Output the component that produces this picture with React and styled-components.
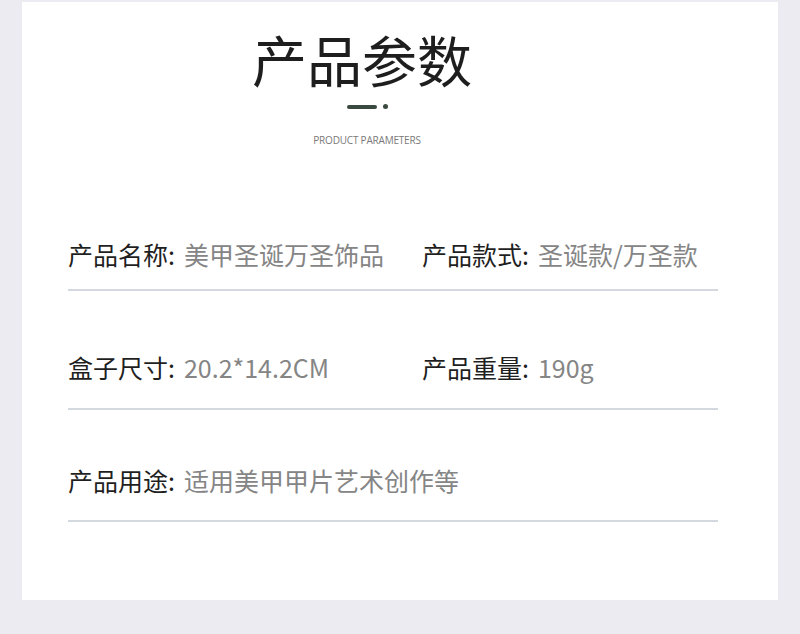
import styled, { createGlobalStyle } from 'styled-components';

const GlobalStyle = createGlobalStyle`
    html, body {
        margin: 0;
        padding: 0;
        background: #ebebf1;
    }
    body {
        font-family: "Noto Sans CJK SC", "Noto Sans", sans-serif;
    }
`

const Page = styled.div`
    width: 800px;
    height: 634px;
    padding: 2px 22px 0;
    box-sizing: border-box;
`

const Card = styled.div`
    background: #ffffff;
    padding: 29px 60px 78px 46px;
    box-sizing: border-box;
    height: 598px;
`

const Header = styled.div`
    display: flex;
    flex-direction: column;
    align-items: center;
    padding-right: 52px;
`

const Title = styled.h1`
    margin: 0 10px 0 0;
    font-size: 55px;
    line-height: 55px;
    font-weight: 400;
    color: #1e1e1e;
`

const Decor = styled.div`
    display: flex;
    align-items: center;
    gap: 6px;
    margin-top: 18px;
`

const Dash = styled.span`
    width: 30px;
    height: 4px;
    border-radius: 2px;
    background: #3b4a3e;
`

const Dot = styled.span`
    width: 5px;
    height: 5px;
    border-radius: 50%;
    background: #3b4a3e;
`

const Subtitle = styled.div`
    margin-top: 25px;
    font-family: "Open Sans", "Liberation Sans", sans-serif;
    font-size: 10px;
    line-height: 12px;
    color: #7a7a7a;
    letter-spacing: -0.2px;
`

const Table = styled.div`
    margin-top: 33px;
    width: 650px;
`

const Row = styled.div`
    display: grid;
    grid-template-columns: 354px 1fr;
    padding: ${(props) => props.$top}px 0 ${(props) => props.$bottom}px;
    border-bottom: 2px solid #d4d9df;
`

const Cell = styled.div`
    display: flex;
    align-items: baseline;
    font-size: 25px;
    line-height: 34px;
    white-space: nowrap;
`

const Label = styled.span`
    color: #1f1f1f;
`

const Value = styled.span`
    margin-left: 9px;
    color: #858585;
`

const rows = [
    {
        top: 58, bottom: 18,
        cells: [['产品名称', '美甲圣诞万圣饰品'], ['产品款式', '圣诞款/万圣款']],
    },
    {
        top: 59, bottom: 24,
        cells: [['盒子尺寸', '20.2*14.2CM'], ['产品重量', '190g']],
    },
    {
        top: 53, bottom: 23,
        cells: [['产品用途', '适用美甲甲片艺术创作等']],
    },
];

const App = () => {
    return (
        <>
            <GlobalStyle />
            <Page>
                <Card>
                    <Header>
                        <Title>产品参数</Title>
                        <Decor>
                            <Dash />
                            <Dot />
                        </Decor>
                        <Subtitle>PRODUCT PARAMETERS</Subtitle>
                    </Header>
                    <Table>
                        {rows.map((row, i) => (
                            <Row key={i} $top={row.top} $bottom={row.bottom}>
                                {row.cells.map(([label, value]) => (
                                    <Cell key={label}>
                                        <Label>{label}:</Label>
                                        <Value>{value}</Value>
                                    </Cell>
                                ))}
                            </Row>
                        ))}
                    </Table>
                </Card>
            </Page>
        </>
    );
};

export default App;
